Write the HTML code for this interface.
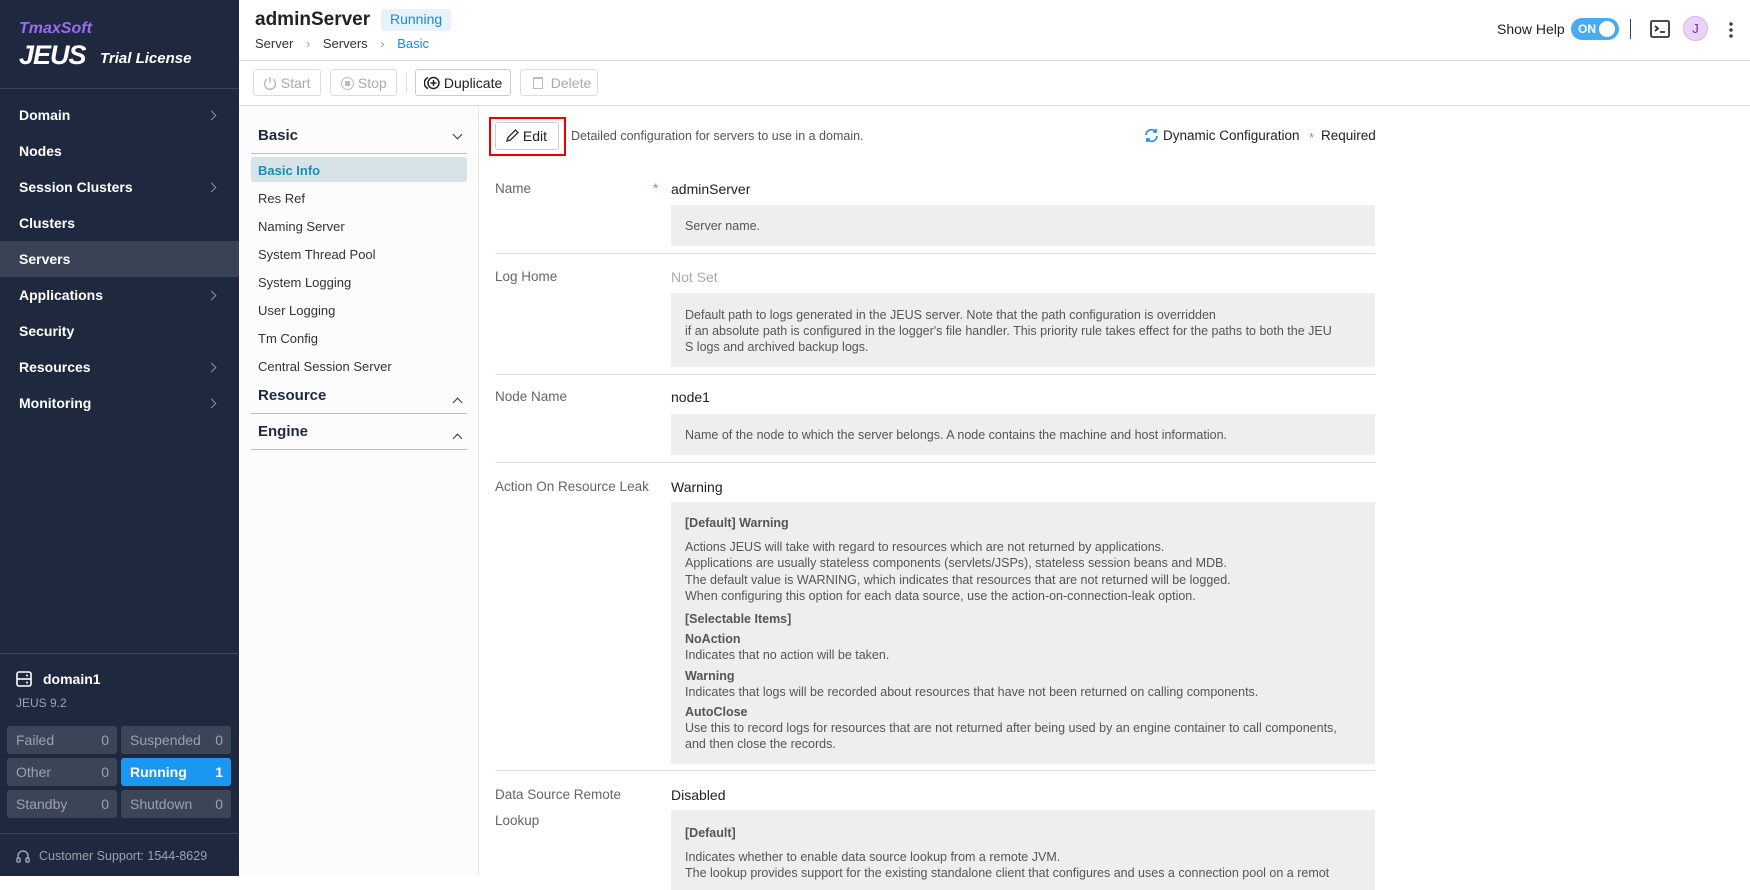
<!DOCTYPE html>
<html><head><meta charset="utf-8"><style>
*{box-sizing:border-box;margin:0;padding:0}
body{width:1750px;height:876px;overflow:hidden;background:#fff;font-family:"Liberation Sans",sans-serif;color:#222;position:relative}
.a{position:absolute;white-space:nowrap}
#sb{position:absolute;left:0;top:0;width:239px;height:876px;background:#1e2940;color:#fff}
.nav{position:absolute;left:19px;font-size:14px;font-weight:bold}
.chev{position:absolute;left:208px;width:7px;height:7px;border-right:1.5px solid #8a93a6;border-top:1.5px solid #8a93a6;transform:rotate(45deg)}
.st{position:absolute;height:28px;background:#3c4558;border-radius:3px;color:#9aa2b2;font-size:14px;padding:6px 8px 0 9px}
.st b{position:absolute;right:8px;top:6px;font-weight:normal}
.btn{position:absolute;top:69px;height:27px;border:1px solid #ddd;border-radius:3px;font-size:14px;color:#aaa;padding:5px 0 0 0}
.lm{position:absolute;left:258px;font-size:13px;color:#333}
.lbl{position:absolute;left:495px;font-size:13.5px;color:#666}
.val{position:absolute;left:671px;font-size:14px;color:#222}
.hb{position:absolute;left:671px;width:704px;background:#edeef0;font-size:12.5px;color:#555;padding:0 14px;line-height:16.2px}
.sep{position:absolute;left:495px;width:880px;height:1px;background:#ddd}
</style></head><body>
<div id="sb">
 <div class="a" style="left:19px;top:20px;font-size:16px;font-weight:bold;font-style:italic;color:#9b6cf0">TmaxSoft</div>
 <div class="a" style="left:19px;top:40px;font-size:27px;font-weight:900;font-style:italic;letter-spacing:-1px">JEUS</div>
 <div class="a" style="left:100px;top:50px;font-size:15px;font-weight:bold;font-style:italic">Trial License</div>
 <div style="position:absolute;left:0;top:88px;width:239px;height:1px;background:#3a4459"></div>
 <div style="position:absolute;left:0;top:241px;width:239px;height:36px;background:#3a4356"></div>
 <div class="nav" style="top:107px">Domain</div><div class="chev" style="top:112px"></div>
 <div class="nav" style="top:143px">Nodes</div>
 <div class="nav" style="top:179px">Session Clusters</div><div class="chev" style="top:184px"></div>
 <div class="nav" style="top:215px">Clusters</div>
 <div class="nav" style="top:251px">Servers</div>
 <div class="nav" style="top:287px">Applications</div><div class="chev" style="top:292px"></div>
 <div class="nav" style="top:323px">Security</div>
 <div class="nav" style="top:359px">Resources</div><div class="chev" style="top:364px"></div>
 <div class="nav" style="top:395px">Monitoring</div><div class="chev" style="top:400px"></div>
 <div style="position:absolute;left:0;top:653px;width:239px;height:1px;background:#3a4459"></div>
 <svg class="a" style="left:16px;top:671px" width="16" height="16" viewBox="0 0 16 16" fill="none" stroke="#fff" stroke-width="1.6"><rect x="1" y="1" width="14" height="14" rx="2"/><line x1="1" y1="8" x2="15" y2="8"/><line x1="10" y1="4.5" x2="12" y2="4.5"/><line x1="10" y1="11.5" x2="12" y2="11.5"/></svg>
 <div class="a" style="left:43px;top:671px;font-size:14px;font-weight:bold">domain1</div>
 <div class="a" style="left:16px;top:696px;font-size:12px;color:#9aa2b2">JEUS 9.2</div>
 <div class="st" style="left:7px;top:726px;width:110px">Failed<b>0</b></div>
 <div class="st" style="left:121px;top:726px;width:110px">Suspended<b>0</b></div>
 <div class="st" style="left:7px;top:758px;width:110px">Other<b>0</b></div>
 <div class="st" style="left:121px;top:758px;width:110px;background:#1a97f0;color:#fff;font-weight:bold">Running<b style="font-weight:bold">1</b></div>
 <div class="st" style="left:7px;top:790px;width:110px">Standby<b>0</b></div>
 <div class="st" style="left:121px;top:790px;width:110px">Shutdown<b>0</b></div>
 <div style="position:absolute;left:0;top:833px;width:239px;height:1px;background:#3a4459"></div>
 <svg class="a" style="left:16px;top:849px" width="14" height="15" viewBox="0 0 14 15" fill="none" stroke="#9aa2b2" stroke-width="1.5"><path d="M2 10V7a5 5 0 0 1 10 0v3"/><rect x="1" y="9" width="3" height="4" rx="1"/><rect x="10" y="9" width="3" height="4" rx="1"/></svg>
 <div class="a" style="left:39px;top:849px;font-size:12.5px;color:#9aa2b2">Customer Support: 1544-8629</div>
</div>

<div class="a" style="left:255px;top:9px;font-size:19px;font-weight:bold;color:#222">adminServer</div>
<div class="a" style="left:381px;top:9px;height:22px;background:#e6f2fd;color:#1a87e0;font-size:14px;padding:2px 9px;border-radius:3px">Running</div>
<div class="a" style="left:255px;top:36px;font-size:13px;color:#333">Server <span style="color:#999;margin:0 9px">›</span> Servers <span style="color:#999;margin:0 9px">›</span> <span style="color:#1a87e0">Basic</span></div>
<div class="a" style="left:1497px;top:21px;font-size:14px;color:#222">Show Help</div>
<div class="a" style="left:1571px;top:18px;width:48px;height:22px;border-radius:11px;background:#4aaaf0;color:#fff;font-size:12px;font-weight:bold;padding:4px 0 0 7px">ON<span style="position:absolute;right:4px;top:3px;width:16px;height:16px;border-radius:50%;background:#fff"></span></div>
<div class="a" style="left:1630px;top:19px;width:1px;height:20px;background:#444"></div>
<svg class="a" style="left:1650px;top:20px" width="20" height="18" viewBox="0 0 20 18" fill="none" stroke="#333" stroke-width="1.8"><rect x="1" y="1" width="18" height="16" rx="1.5"/><path d="M5 6l3 2.5L5 11M10 12h5"/></svg>
<div class="a" style="left:1683px;top:16px;width:25px;height:25px;border-radius:50%;background:#ead3f7;border:1px solid #d9b3f0;color:#6a2f8a;font-size:13px;text-align:center;line-height:23px">J</div>
<div class="a" style="left:1729px;top:21px;width:4px;height:18px;background:radial-gradient(circle,#444 1.6px,transparent 2px) 0 0/4px 6px"></div>
<div style="position:absolute;left:239px;top:60px;width:1511px;height:1px;background:#ddd"></div>

<div class="btn" style="left:253px;width:68px;padding-left:9px"><svg width="14" height="14" viewBox="0 0 14 14" fill="none" stroke="#bbb" stroke-width="1.5" style="vertical-align:-2px"><path d="M4 3.2a5.5 5.5 0 1 0 6 0M7 1v6"/></svg> Start</div>
<div class="btn" style="left:330px;width:67px;padding-left:10px"><span style="display:inline-block;width:13px;height:13px;border:1.5px solid #bbb;border-radius:50%;vertical-align:-2px;position:relative"><i style="position:absolute;left:2.5px;top:2.5px;width:5px;height:5px;background:#bbb"></i></span> Stop</div>
<div class="a" style="left:406px;top:72px;width:1px;height:21px;background:#ddd"></div>
<div class="btn" style="left:415px;width:96px;color:#222;border-color:#ccc;padding-left:8px">
<svg width="16" height="14" viewBox="0 0 16 14" style="vertical-align:-2px" fill="none" stroke="#222" stroke-width="1.5"><path d="M4 1.5a6 6 0 0 0 0 11"/><circle cx="9.5" cy="7" r="5.5"/><path d="M9.5 4v6M6.5 7h6"/></svg> Duplicate</div>
<div class="btn" style="left:520px;width:78px;padding-left:12px"><span style="display:inline-block;width:10px;height:12px;border:1.5px solid #bbb;border-top-width:2.5px;vertical-align:-1px"></span> &nbsp;Delete</div>
<div style="position:absolute;left:239px;top:105px;width:1511px;height:1px;background:#ddd"></div>

<div style="position:absolute;left:239px;top:106px;width:240px;height:770px;background:#fcfcfd;border-right:1px solid #e6e6e6"></div>
<div class="a" style="left:258px;top:127px;font-size:15px;font-weight:bold;color:#1e2940">Basic</div>
<div class="a" style="left:454px;top:131px;width:7px;height:7px;border-right:1.5px solid #333;border-bottom:1.5px solid #333;transform:rotate(45deg)"></div>
<div style="position:absolute;left:251px;top:153px;width:216px;height:1px;background:#bbbdc8"></div>
<div style="position:absolute;left:251px;top:157px;width:216px;height:25px;background:#d6e3e8;border-radius:3px"></div>
<div class="lm" style="top:163px;color:#1a8fb0;font-weight:bold">Basic Info</div>
<div class="lm" style="top:191px">Res Ref</div>
<div class="lm" style="top:219px">Naming Server</div>
<div class="lm" style="top:247px">System Thread Pool</div>
<div class="lm" style="top:275px">System Logging</div>
<div class="lm" style="top:303px">User Logging</div>
<div class="lm" style="top:331px">Tm Config</div>
<div class="lm" style="top:359px">Central Session Server</div>
<div class="a" style="left:258px;top:387px;font-size:15px;font-weight:bold;color:#1e2940">Resource</div>
<div class="a" style="left:454px;top:399px;width:7px;height:7px;border-left:1.5px solid #333;border-top:1.5px solid #333;transform:rotate(45deg)"></div>
<div style="position:absolute;left:251px;top:413px;width:216px;height:1px;background:#bbbdc8"></div>
<div class="a" style="left:258px;top:423px;font-size:15px;font-weight:bold;color:#1e2940">Engine</div>
<div class="a" style="left:454px;top:435px;width:7px;height:7px;border-left:1.5px solid #333;border-top:1.5px solid #333;transform:rotate(45deg)"></div>
<div style="position:absolute;left:251px;top:449px;width:216px;height:1px;background:#bbbdc8"></div>

<div class="a" style="left:489px;top:117px;width:77px;height:39px;border:2px solid #e00"></div>
<div class="a" style="left:495px;top:122px;width:64px;height:28px;border:1px solid #ccc;border-radius:3px;font-size:14px;padding:5px 0 0 10px"><svg width="13" height="13" viewBox="0 0 13 13" fill="none" stroke="#333" stroke-width="1.4" style="vertical-align:-1px"><path d="M1 12l1-3.5L9.5 1 12 3.5 4.5 11z"/></svg> Edit</div>
<div class="a" style="left:571px;top:129px;font-size:12.5px;color:#555">Detailed configuration for servers to use in a domain.</div>
<svg class="a" style="left:1144px;top:128px" width="15" height="15" viewBox="0 0 15 15" fill="none" stroke="#1a87e0" stroke-width="1.6"><path d="M2 7a5.5 5.5 0 0 1 10-3M13 8a5.5 5.5 0 0 1-10 3"/><path d="M12 1v3h-3M3 14v-3h3"/></svg>
<div class="a" style="left:1163px;top:128px;font-size:13.5px;color:#222">Dynamic Configuration</div>
<div class="a" style="left:1309px;top:131px;font-size:13px;line-height:13px;color:#9b7cf0">*</div>
<div class="a" style="left:1321px;top:128px;font-size:13.5px;color:#222">Required</div>

<div class="lbl" style="top:181px">Name</div>
<div class="a" style="left:653px;top:180px;font-size:14px;color:#9b7cf0">*</div>
<div class="val" style="top:181px">adminServer</div>
<div class="hb" style="top:205px;height:41px;padding-top:13px">Server name.</div>
<div class="sep" style="top:253px"></div>
<div class="lbl" style="top:269px">Log Home</div>
<div class="val" style="top:269px;color:#aaa">Not Set</div>
<div class="hb" style="top:293px;height:74px;padding-top:14px">Default path to logs generated in the JEUS server. Note that the path configuration is overridden<br>if an absolute path is configured in the logger's file handler. This priority rule takes effect for the paths to both the JEU<br>S logs and archived backup logs.</div>
<div class="sep" style="top:374px"></div>
<div class="lbl" style="top:389px">Node Name</div>
<div class="val" style="top:389px">node1</div>
<div class="hb" style="top:414px;height:41px;padding-top:13px">Name of the node to which the server belongs. A node contains the machine and host information.</div>
<div class="sep" style="top:462px"></div>
<div class="lbl" style="top:479px">Action On Resource Leak</div>
<div class="val" style="top:479px">Warning</div>
<div class="hb" style="top:502px;height:262px;padding-top:13px">
<div style="font-weight:bold;margin-bottom:8px">[Default] Warning</div>
<div>Actions JEUS will take with regard to resources which are not returned by applications.<br>Applications are usually stateless components (servlets/JSPs), stateless session beans and MDB.<br>The default value is WARNING, which indicates that resources that are not returned will be logged.<br>When configuring this option for each data source, use the action-on-connection-leak option.</div>
<div style="font-weight:bold;margin-top:7px">[Selectable Items]</div>
<div style="font-weight:bold;margin-top:4px">NoAction</div><div>Indicates that no action will be taken.</div>
<div style="font-weight:bold;margin-top:4px">Warning</div><div>Indicates that logs will be recorded about resources that have not been returned on calling components.</div>
<div style="font-weight:bold;margin-top:4px">AutoClose</div><div>Use this to record logs for resources that are not returned after being used by an engine container to call components,<br>and then close the records.</div>
</div>
<div class="sep" style="top:770px"></div>
<div class="lbl" style="top:787px">Data Source Remote</div>
<div class="lbl" style="top:813px">Lookup</div>
<div class="val" style="top:787px">Disabled</div>
<div class="hb" style="top:810px;height:80px;padding-top:15px">
<div style="font-weight:bold;margin-bottom:8px">[Default]</div>
<div>Indicates whether to enable data source lookup from a remote JVM.<br>The lookup provides support for the existing standalone client that configures and uses a connection pool on a remot</div>
</div>
</body></html>
